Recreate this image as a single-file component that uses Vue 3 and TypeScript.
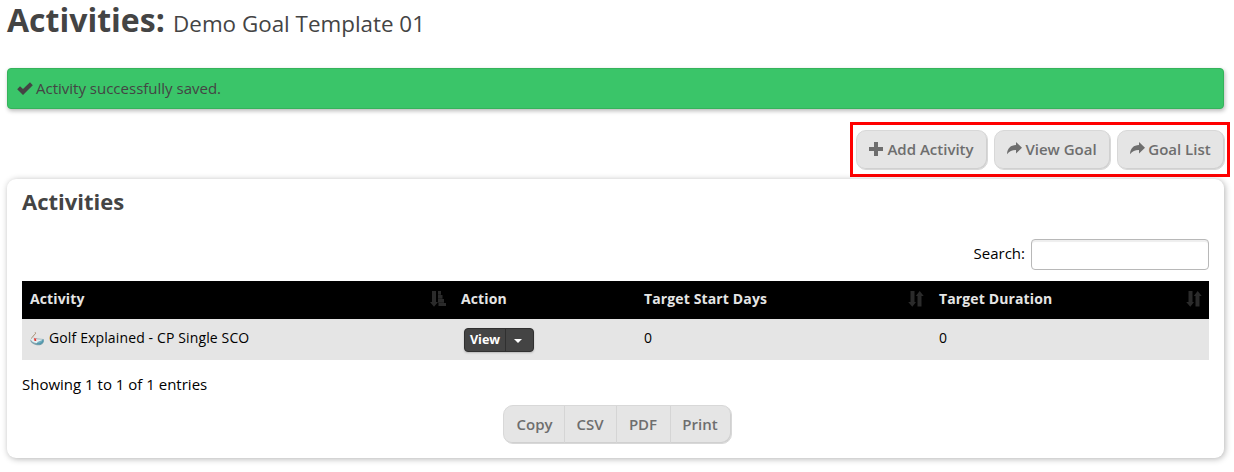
<script setup lang="ts">
interface Column {
  label: string
  sort?: 'asc' | 'both'
}

const actions = [
  { label: 'Add Activity', icon: 'plus', cls: 'add' },
  { label: 'View Goal', icon: 'share', cls: 'view-goal' },
  { label: 'Goal List', icon: 'share', cls: 'goal-list' },
]

const columns: Column[] = [
  { label: 'Activity', sort: 'asc' },
  { label: 'Action' },
  { label: 'Target Start Days', sort: 'both' },
  { label: 'Target Duration', sort: 'both' },
]

const rows = [{ name: 'Golf Explained - CP Single SCO', startDays: 0, duration: 0 }]
const exportsList = ['Copy', 'CSV', 'PDF', 'Print']
</script>

<template>
  <main class="page">
    <h1>Activities: <small>Demo Goal Template 01</small></h1>

    <div class="alert">
      <svg class="check" viewBox="0 0 16 13"><path d="M.2 7.200 3 4.200l3 2.800L13 .3l2.800 2.900L6 12.900z" /></svg>
      <span>Activity successfully saved.</span>
    </div>

    <div class="toolbar">
      <button v-for="a in actions" :key="a.label" class="btn" :class="a.cls">
        <svg v-if="a.icon === 'plus'" class="ico" viewBox="0 0 14 14"><path d="M5 0h4v5h5v4H9v5H5V9H0V5h5z" /></svg>
        <svg v-else class="ico share" viewBox="0 0 15 13"><path d="M9 0l6 5.700-6 5.700V8C5.200 7.900 2.600 8.900 0 12.200 .3 6.200 3.700 3.100 9 3z" /></svg>
        <span>{{ a.label }}</span>
      </button>
    </div>

    <section class="panel">
      <h2>Activities</h2>
      <label class="search">Search:<input type="text" /></label>

      <table>
        <colgroup><col class="c1" /><col class="c2" /><col class="c3" /><col class="c4" /></colgroup>
        <thead>
          <tr>
            <th v-for="c in columns" :key="c.label">
              <div class="head">
                <span>{{ c.label }}</span>
                <svg v-if="c.sort === 'asc'" class="sort" viewBox="0 0 16 16">
                  <path d="M2 0h4v11h2L4 15.800 0 11h2zM8 0h3v3.700H8zM8 4h4.500v3.700H8zM8 8h6v3.700H8zM8.500 12H16v3H8.500z" />
                </svg>
                <svg v-else-if="c.sort === 'both'" class="sort" viewBox="0 0 16 16">
                  <path d="M2.500 0h4v11H8l-3.700 4.800L.2 11h2.300zM9.500 15.500V5H7.800l3.900-5 4 5h-2.200v10.500z" />
                </svg>
              </div>
            </th>
          </tr>
        </thead>
        <tbody>
          <tr v-for="r in rows" :key="r.name">
            <td>
              <div class="name">
                <svg class="mouse" viewBox="0 0 14 14">
                  <path d="M5 .2C7.500 2.200 1 3.700 1.500 8" fill="none" stroke="#a58a6c" stroke-width="1" />
                  <path d="M.3 8.500C1.500 5.500 4 5 6.500 6.500l7 .5c1.200 3-1 6.300-5 6.300C5 13.300 1 11.500 .3 8.500z" fill="#7fa3ae" />
                  <path d="M.8 7.800C2 5.200 5 5.300 7 7.300l5.500.2c0 2.500-2 3.800-4.200 3.800-3 0-6-.8-7.500-3.500z" fill="#e4eff2" />
                  <path d="M7.500 10l6-2.500v2.500l-3 2.500-4-.2z" fill="#3f91aa" opacity=".7" />
                  <path d="M4 6.500l2.200 2M6.200 6.500 4.500 8.700" stroke="#e0352f" stroke-width="1.200" />
                </svg>
                <span>{{ r.name }}</span>
              </div>
            </td>
            <td>
              <div class="split">
                <button class="main">View</button>
                <button class="toggle" aria-label="More actions"><i class="caret"></i></button>
              </div>
            </td>
            <td>{{ r.startDays }}</td>
            <td>{{ r.duration }}</td>
          </tr>
        </tbody>
      </table>

      <p class="info">Showing 1 to 1 of 1 entries</p>
      <div class="exports">
        <button v-for="e in exportsList" :key="e" :class="e.toLowerCase()">{{ e }}</button>
      </div>
    </section>
  </main>
</template>

<style>
body {
  background: #fff;
}
</style>

<style scoped>
* {
  box-sizing: border-box;
}
.page {
  height: 472px;
  padding: 0 10px 0 7px;
  overflow: hidden;
  font: 15px/20px "Open Sans", sans-serif;
  color: #000;
}
h1 {
  margin: 0;
  height: 68px;
  font-size: 32px;
  line-height: 40px;
  font-weight: 700;
  color: #444;
  white-space: nowrap;
}
h1 small {
  font-size: 22.400px;
  font-weight: 400;
}
button {
  font: inherit;
  margin: 0;
  padding: 0;
  white-space: nowrap;
}
svg {
  flex: none;
  fill: currentColor;
}
.alert {
  display: flex;
  align-items: center;
  height: 41px;
  padding-left: 9px;
  border: 1px solid #35b35b;
  border-radius: 4px;
  background: #3ac569;
  color: #444;
  box-shadow: 1px 2px 4px rgba(0, 0, 0, .28);
}
.alert span,
.btn span {
  padding-bottom: 2px;
}
.check {
  width: 16px;
  height: 13px;
  margin-right: 3px;
}
.toolbar {
  display: flex;
  gap: 6px;
  width: 380px;
  height: 55px;
  margin: 13px -6px 2px auto;
  padding: 5px 2px 4px 3px;
  border: 3px solid #f00;
}
.btn {
  display: flex;
  align-items: center;
  justify-content: center;
  height: 40px;
  padding-right: 1px;
  border: 1px solid #d8d8d8;
  border-radius: 10px;
  background: #e5e5e5;
  color: #6e6e6e;
  font-weight: 600;
  box-shadow: inset -1px -1px 0 #d0d0d0;
}
.btn.add {
  width: 132px;
}
.btn.view-goal {
  width: 117px;
}
.btn.goal-list {
  width: 108px;
}
.ico {
  width: 14px;
  height: 14px;
  margin: 0 4px 2px 0;
}
.ico.share {
  width: 15px;
  height: 13px;
  margin: 0 3px 3px 0;
}
.panel {
  height: 279px;
  padding: 9px 15px 0;
  border-radius: 9px;
  background: #fff;
  box-shadow: 1px 1px 6px rgba(0, 0, 0, .3);
}
h2 {
  margin: 0;
  height: 51px;
  font-size: 22px;
  line-height: 26px;
  font-weight: 700;
  color: #444;
}
.search {
  display: flex;
  justify-content: flex-end;
  gap: 6px;
  height: 42px;
  line-height: 28px;
}
.search input {
  width: 178px;
  height: 31px;
  border: 1px solid #b8b8b8;
  border-radius: 4px;
  background: #fff;
  box-shadow: inset 0 2px 1px #eee;
}
table {
  width: 1187px;
  table-layout: fixed;
  border-collapse: collapse;
  font-size: 14px;
  letter-spacing: .13px;
}
.c1 { width: 431px; }
.c2 { width: 183px; }
.c3 { width: 295px; }
.c4 { width: 278px; }
th {
  height: 38px;
  padding: 0 7px 2px 8px;
  background: #000;
  color: #e5e5e5;
  text-align: left;
  font-weight: 700;
}
.head {
  display: flex;
  align-items: center;
  justify-content: space-between;
}
.sort {
  width: 16px;
  height: 16px;
  color: #2b2b2b;
}
td {
  height: 41px;
  padding: 0 8px 3px;
  background: #e5e5e5;
}
.name {
  display: flex;
  align-items: center;
  gap: 5px;
}
.mouse {
  width: 14px;
  height: 14px;
  margin-top: 2px;
}
.split {
  display: flex;
  width: 70px;
  height: 24px;
  margin: 4px 0 0 3px;
  border: 1px solid #303030;
  border-radius: 4px;
  background: #444;
  box-shadow: 0 1px 2px rgba(0, 0, 0, .2);
}
.split button {
  border: 0;
  background: transparent;
  color: #fff;
  font-size: 12.600px;
  line-height: 20px;
  font-weight: 700;
}
.split .main {
  width: 41px;
  padding-bottom: 1px;
  border-right: 1px solid #303030;
}
.split .toggle {
  display: flex;
  align-items: center;
  padding-left: 8px;
}
.caret {
  border: 4px solid transparent;
  border-top-color: #fff;
  border-bottom: 0;
  margin-top: 2px;
}
.info {
  margin: 14px 0 11px;
}
.exports {
  display: flex;
  width: 229px;
  height: 39px;
  margin: 0 auto;
  border: 1px solid #d8d8d8;
  border-radius: 10px;
  background: #e5e5e5;
  box-shadow: inset -1px -1px 0 #d0d0d0;
  transform: translateX(2px);
}
.exports button {
  padding: 0 1px 2px 0;
  border: 0;
  border-left: 1px solid #d5d5d5;
  background: transparent;
  color: #6e6e6e;
  font-weight: 600;
}
.exports .copy { width: 61px; padding-right: 0; border-left: 0; }
.exports .csv { width: 52px; }
.exports .pdf { width: 54px; }
.exports .print { width: 60px; }
.exports .copy { flex: 0 0 61px; margin-right: -1px; }
</style>
